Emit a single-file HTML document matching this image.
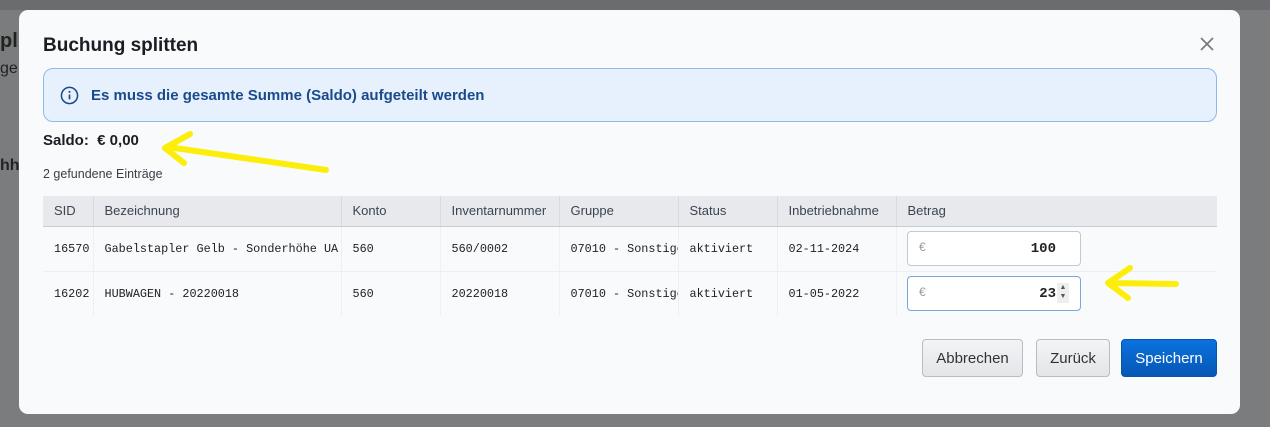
<!DOCTYPE html>
<html><head><meta charset="utf-8"><style>
*{box-sizing:border-box;margin:0;padding:0}
body{width:1270px;height:427px;overflow:hidden;background:#7b7c7d;font-family:"Liberation Sans",sans-serif;position:relative}
.top{position:absolute;left:0;top:0;width:1270px;height:10px;background:#6b6c70}
.bgtxt{position:absolute;color:#222;font-weight:bold;font-size:20px}
.modal{position:absolute;left:19px;top:10px;width:1221px;height:404px;background:#f9fafb;border-radius:9px}
h1{position:absolute;left:24px;top:25px;font-size:19px;font-weight:bold;color:#1a1d23}
.close{position:absolute;left:1180px;top:26px}
.info{position:absolute;left:24px;top:58px;width:1174px;height:54px;background:#e6f1fd;border:1px solid #8dbbe9;border-radius:10px}
.info span{position:absolute;left:47px;top:18px;font-size:15px;font-weight:bold;color:#1b4a8c}
.saldo{position:absolute;left:24px;top:122px;font-size:15px;font-weight:bold;color:#1a1d23}
.cnt{position:absolute;left:24px;top:157px;font-size:12.5px;color:#3a3f47}
table{position:absolute;left:24px;top:186px;border-collapse:collapse;width:1174px;table-layout:fixed}
th{height:30px;background:#e8e9ec;text-align:left;font-weight:normal;font-size:13px;color:#3b4450;padding-left:11px;border-right:1px solid #d8dadf;border-bottom:1px solid #c9ccd3}
th:last-child{border-right:none}
td{height:45px;font-family:"Liberation Mono",monospace;font-size:11.8px;color:#222;padding-left:11px;border-right:1px solid #eef0f2;border-bottom:1px solid #eceef1;white-space:nowrap;overflow:hidden}
td:last-child{border-right:none}
tr:last-child td{border-bottom:none}
.inp{position:absolute;left:888px;width:174px;height:35px;background:#fff;border:1px solid #c4c8cf;border-radius:4px}
.inp .e{position:absolute;left:11px;top:8px;font-size:12px;color:#999}
.inp .v{position:absolute;right:24px;top:9px;font-family:"Liberation Mono",monospace;font-weight:bold;font-size:14px;color:#222}
.btn{position:absolute;top:329px;height:38px;border-radius:4px;font-size:15px;text-align:center;line-height:37px;border:1px solid #b9bcc2;background:linear-gradient(#f3f4f6,#e3e5e8);color:#333}
.arrow{position:absolute}
</style></head><body>
<div class="top"></div>
<div class="bgtxt" style="left:0;top:30px">pl</div>
<div class="bgtxt" style="left:0;top:60px;font-weight:normal;font-size:16px">ge</div>
<div class="bgtxt" style="left:0;top:157px;font-size:16px">hha</div>
<div class="modal">
<h1>Buchung splitten</h1>
<svg class="close" width="16" height="16" viewBox="0 0 16 16"><path d="M2 2L14 14M14 2L2 14" stroke="#777" stroke-width="1.6"/></svg>
<div class="info"><svg style="position:absolute;left:16px;top:17px" width="19" height="19" viewBox="0 0 20 20"><circle cx="10" cy="10" r="8.5" fill="none" stroke="#1b4a8c" stroke-width="1.6"/><path d="M10 9v5" stroke="#1b4a8c" stroke-width="1.8"/><circle cx="10" cy="6.2" r="1.1" fill="#1b4a8c"/></svg><span>Es muss die gesamte Summe (Saldo) aufgeteilt werden</span></div>
<div class="saldo">Saldo:&nbsp; € 0,00</div>
<div class="cnt">2 gefundene Einträge</div>
<table>
<colgroup><col style="width:50px"><col style="width:248px"><col style="width:99px"><col style="width:119px"><col style="width:119px"><col style="width:99px"><col style="width:119px"><col></colgroup>
<tr><th>SID</th><th>Bezeichnung</th><th>Konto</th><th>Inventarnummer</th><th>Gruppe</th><th>Status</th><th>Inbetriebnahme</th><th>Betrag</th></tr>
<tr><td>16570</td><td>Gabelstapler Gelb - Sonderhöhe UA</td><td>560</td><td>560/0002</td><td>07010 - Sonstige</td><td>aktiviert</td><td>02-11-2024</td><td></td></tr>
<tr><td>16202</td><td>HUBWAGEN - 20220018</td><td>560</td><td>20220018</td><td>07010 - Sonstige</td><td>aktiviert</td><td>01-05-2022</td><td></td></tr>
</table>
<div class="inp" style="top:221px"><span class="e">€</span><span class="v">100</span></div>
<div class="inp" style="top:266px;border-color:#7aa7dc"><span class="e">€</span><span class="v">23</span><div style="position:absolute;left:149px;top:6px;width:12px;height:20px;background:#eee;font-size:7px;line-height:9px;color:#555;text-align:center">▲<br>▼</div></div>
<div class="btn" style="left:903px;width:101px">Abbrechen</div>
<div class="btn" style="left:1017px;width:74px">Zurück</div>
<div class="btn" style="left:1102px;width:96px;background:linear-gradient(#0a72de,#0657b5);border-color:#0656b0;color:#fff">Speichern</div>
</div>
<svg class="arrow" style="left:0;top:0" width="1270" height="427"><g fill="none" stroke="#fcee0a" stroke-width="6" stroke-linecap="round" stroke-linejoin="round"><path d="M326 170L168 147M190 134L165 148L184 163"/><path d="M1176 284L1108 283M1130 268L1108 283L1128 298"/></g></svg>
</body></html>
